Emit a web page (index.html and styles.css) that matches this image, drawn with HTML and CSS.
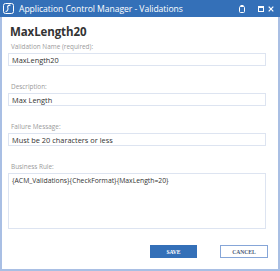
FILE: index.html
```html
<!DOCTYPE html>
<html lang="en">
<head>
    <meta charset="UTF-8">
    <title>Application Control Manager - Validations</title>
    <link rel="stylesheet" href="styles.css">
</head>
<body>
    <div class="window">
        <div class="titlebar">
            <svg class="logo" width="11" height="11" viewBox="0 0 11 11">
                <rect x="0.5" y="0.5" width="10" height="10" rx="2" fill="none" stroke="#fff" stroke-width="1"/>
                <path d="M7.5 2.2 C5.5 2 4.2 3 4.8 4.6 C5.4 6.2 4.6 8.4 2.6 8.6" fill="none" stroke="#fff" stroke-width="1.1"/>
            </svg>
            <span class="title">Application Control Manager - Validations</span>
            <div class="controls">
                <svg width="6" height="8" viewBox="0 0 6 8">
                    <rect x="0.5" y="1.5" width="5" height="6" rx="1" fill="none" stroke="#fff"/>
                    <rect x="1.5" y="0" width="3" height="2" fill="#fff"/>
                </svg>
                <svg class="max" width="6" height="6" viewBox="0 0 6 6">
                    <rect x="0.5" y="0.5" width="5" height="5" fill="none" stroke="#fff"/>
                    <rect x="0.5" y="0.5" width="5" height="1.5" fill="#fff"/>
                </svg>
                <svg width="6" height="6" viewBox="0 0 6 6">
                    <path d="M0.7 0.7 L5.3 5.3 M5.3 0.7 L0.7 5.3" stroke="#fff" stroke-width="1.2"/>
                </svg>
            </div>
        </div>

        <div class="content">
            <h1>MaxLength20</h1>

            <div class="field">
                <label for="name">Validation Name (required):</label>
                <input type="text" id="name" value="MaxLength20">
            </div>

            <div class="field">
                <label for="desc">Description:</label>
                <input type="text" id="desc" value="Max Length">
            </div>

            <div class="field">
                <label for="fail">Failure Message:</label>
                <input type="text" id="fail" value="Must be 20 characters or less">
            </div>

            <div class="field">
                <label for="rule">Business Rule:</label>
                <textarea id="rule">{ACM_Validations}{CheckFormat}{MaxLength=20}</textarea>
            </div>

            <div class="actions">
                <button class="btn save">SAVE</button>
                <button class="btn cancel">CANCEL</button>
            </div>
        </div>
    </div>
</body>
</html>
```

FILE: styles.css
```css
html, body {
    margin: 0;
    padding: 0;
    background: #fff;
}
body {
    font-family: "Open Sans", "Noto Sans", sans-serif;
    color: #333;
}
.window {
    box-sizing: border-box;
    width: 280px;
    height: 271px;
    border: 2px solid #a9bfe4;
    border-top: none;
    background: #fff;
}
.titlebar {
    height: 17px;
    margin: 0 -2px;
    background: #3470b8;
    color: #fff;
    display: flex;
    align-items: center;
    padding: 0 6px 0 3px;
}
.logo {
    display: block;
    margin-right: 5px;
}
.title {
    font-size: 8.6px;
    letter-spacing: -0.05px;
    flex: 1;
    white-space: nowrap;
}
.controls {
    display: flex;
    align-items: center;
}
.controls svg {
    display: block;
}
.controls .max {
    margin-left: 13px;
    margin-right: 4px;
}
.content {
    padding: 7px 10px 0 6px;
}
h1 {
    font-size: 11.5px;
    font-weight: bold;
    line-height: 15px;
    margin: 0 0 3px 0;
    padding-left: 2px;
    letter-spacing: -0.1px;
}
.field {
    margin-bottom: 16px;
}
label {
    display: block;
    font-size: 6.4px;
    line-height: 10px;
    color: #9a9a9a;
    padding-left: 3px;
    margin-bottom: 1px;
}
input[type="text"], textarea {
    display: block;
    box-sizing: border-box;
    width: 258px;
    height: 13px;
    margin: 0;
    padding: 0 0 0 3px;
    border: 1px solid #dde4f1;
    font-family: "Open Sans", "Noto Sans", sans-serif;
    font-size: 7.4px;
    color: #333;
    background: #fff;
    outline: none;
}
textarea {
    height: 56px;
    padding: 2px 3px;
    resize: none;
    font-size: 6.8px;
    line-height: 9px;
}
.field:last-of-type {
    margin-bottom: 22px;
}
.actions {
    display: flex;
    justify-content: flex-end;
    gap: 23px;
}
.btn {
    box-sizing: border-box;
    width: 47px;
    height: 13px;
    padding: 0;
    font-family: "Liberation Serif", serif;
    font-size: 5.6px;
    font-weight: bold;
    border-radius: 0;
    cursor: pointer;
}
.save {
    background: #3470b8;
    border: 1px solid #3470b8;
    color: #fff;
}
.cancel {
    width: 48px;
    background: #fff;
    border: 1px solid #86a6d8;
    color: #4a5a78;
}
```
